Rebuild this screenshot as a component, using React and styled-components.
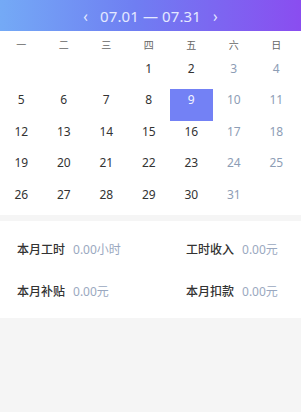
import React from 'react';
import styled, { createGlobalStyle } from 'styled-components';

const GlobalStyle = createGlobalStyle`
    html, body {
        margin: 0;
        padding: 0;
        background: #f5f5f5;
        font-family: 'Noto Sans', 'Noto Sans CJK SC', sans-serif;
    }
`;

const Page = styled.div`
    width: 301px;
    min-height: 412px;
    background: #f5f5f5;
`;

const Header = styled.div`
    height: 31px;
    display: flex;
    align-items: center;
    justify-content: center;
    gap: 6px;
    background: linear-gradient(90deg, #74aaf6 0%, #6f7ef2 45%, #8a4df0 100%);
    color: #e4e9ff;
    font-size: 15px;
    letter-spacing: 0.1px;
`;

const Chevron = styled.span`
    font-size: 15px;
    line-height: 1;
    padding: 0 6px;
    transform: scaleY(1.1);
`;

const CalendarCard = styled.div`
    background: #fff;
    margin-bottom: 6px;
`;

const Grid = styled.div`
    display: grid;
    grid-template-columns: repeat(7, 42.5px);
`;

const WeekCell = styled.div`
    height: 26.5px;
    display: flex;
    align-items: center;
    justify-content: center;
    font-size: 10px;
    color: #666;
`;

const DayCell = styled.div`
    height: 31.5px;
    box-sizing: border-box;
    padding-top: 3px;
    display: flex;
    align-items: flex-start;
    justify-content: center;
    font-size: 12px;
    line-height: 16px;
    color: ${p => (p.$selected ? '#f2f4ff' : p.$weekend ? '#8d9db5' : '#333')};
    background: ${p => (p.$selected ? '#7381f5' : 'transparent')};
`;

const StatsCard = styled.div`
    background: #fff;
    padding: 21px 17px 18px 17px;
    display: grid;
    grid-template-columns: 169px 1fr;
    row-gap: 26px;
`;

const Stat = styled.div`
    display: flex;
    align-items: baseline;
    gap: 8px;
    font-size: 12px;
    line-height: 16px;
`;

const Label = styled.span`
    color: #333;
    font-weight: 500;
`;

const Value = styled.span`
    color: #9aa8c0;
`;

const weekdays = ['一', '二', '三', '四', '五', '六', '日'];

function buildDays() {
    const cells = [];
    for (let i = 0; i < 3; i++) cells.push(null);
    for (let d = 1; d <= 31; d++) cells.push(d);
    return cells;
}

const stats = [
    ['本月工时', '0.00小时'],
    ['工时收入', '0.00元'],
    ['本月补贴', '0.00元'],
    ['本月扣款', '0.00元'],
];

export default function App() {
    const days = buildDays();
    return (
        <Page>
            <GlobalStyle />
            <Header>
                <Chevron>‹</Chevron>
                <span>07.01 — 07.31</span>
                <Chevron>›</Chevron>
            </Header>
            <CalendarCard>
                <Grid>
                    {weekdays.map(w => (
                        <WeekCell key={w}>{w}</WeekCell>
                    ))}
                </Grid>
                <Grid>
                    {days.map((d, i) => (
                        <DayCell
                            key={i}
                            $weekend={i % 7 >= 5}
                            $selected={d === 9}
                        >
                            {d}
                        </DayCell>
                    ))}
                </Grid>
            </CalendarCard>
            <StatsCard>
                {stats.map(([label, value]) => (
                    <Stat key={label}>
                        <Label>{label}</Label>
                        <Value>{value}</Value>
                    </Stat>
                ))}
            </StatsCard>
        </Page>
    );
}
